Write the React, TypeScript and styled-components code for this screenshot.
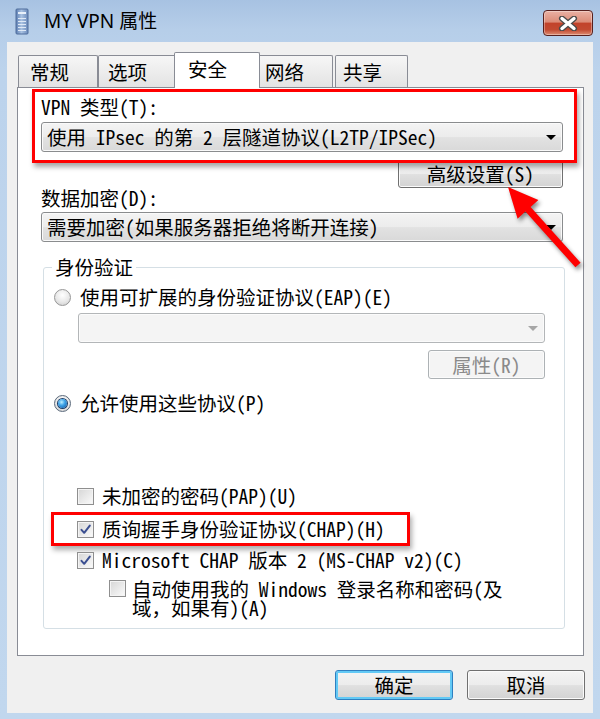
import React from 'react';
import styled, { createGlobalStyle } from 'styled-components';

const Global = createGlobalStyle`
  body {
    margin: 0;
    font-family: "Noto Sans Mono CJK SC", "Noto Sans CJK SC", "DejaVu Sans", sans-serif;
    font-size: 19.5px;
    color: #000;
  }
`;

const Window = styled.div`
  position: relative;
  width: 600px;
  height: 719px;
  display: flex;
  flex-direction: column;
  overflow: hidden;
  background: linear-gradient(180deg, #a7c2e2 0px, #b6cee9 30px, #bcd3ec 70px, #c1d7ee 100%);
`;

const TitleBar = styled.div`
  height: 42px;
  flex-shrink: 0;
  display: flex;
  align-items: center;
  padding-left: 15px;
`;

const Title = styled.span`
  margin-left: 15px;
  font-family: "Noto Sans", "Noto Sans CJK SC", sans-serif;
  font-size: 19px;
  line-height: 24px;
`;

const CloseButton = styled.div`
  width: 50px;
  height: 26px;
  box-sizing: border-box;
  align-self: flex-start;
  margin: 10px 7px 0 auto;
  border: 1px solid #57201e;
  border-radius: 4px;
  background: linear-gradient(180deg, #eab1a4 0%, #dc8c78 45%, #c2432b 52%, #c24a31 78%, #de8d72 100%);
  box-shadow: inset 0 0 0 1px rgba(255, 255, 255, 0.35);
  display: flex;
  align-items: center;
  justify-content: center;
`;

const Client = styled.div`
  flex: 1;
  margin: 0 7px 6px;
  padding: 10px 9px 0 10px;
  background: #f0f0f0;
  display: flex;
  flex-direction: column;
`;

const TabRow = styled.div`
  height: 35px;
  display: flex;
  align-items: flex-end;
  padding-left: 1px;
  position: relative;
  z-index: 1;
`;

const Tab = styled.div<{ $w: number; $pad: number; $active?: boolean; $gap?: number }>`
  width: ${(p) => p.$w}px;
  height: ${(p) => (p.$active ? 36 : 32)}px;
  box-sizing: border-box;
  flex-shrink: 0;
  padding: 5px 0 0 ${(p) => p.$pad}px;
  line-height: 22px;
  border: 1px solid #898c95;
  border-bottom: none;
  border-radius: 2px 2px 0 0;
  margin: ${(p) => (p.$active ? '0 -2px -1px -2px' : `0 0 0 ${p.$gap ?? 0}px`)};
  position: relative;
  z-index: ${(p) => (p.$active ? 2 : 0)};
  background: ${(p) =>
    p.$active ? '#ffffff' : 'linear-gradient(180deg, #f6f6f6 0%, #ececec 55%, #e3e3e3 100%)'};
`;

const Panel = styled.div`
  height: 569px;
  box-sizing: border-box;
  background: #fff;
  border: 1px solid #898c95;
  padding: 0 20px 0 23px;
  display: flex;
  flex-direction: column;
  position: relative;
  z-index: 0;
`;

const Callout = styled.div`
  position: relative;
  z-index: 1;
  border: 3px solid #ff0000;
  box-shadow: 2px 4px 5px rgba(0, 0, 0, 0.35);
  margin: 1px -14px 0 -9px;
  padding: 4px 11px 8px 6px;
`;

const FieldLabel = styled.div<{ $top?: number }>`
  line-height: 22px;
  margin-top: ${(p) => p.$top ?? 0}px;
  white-space: nowrap;
`;

const Combo = styled.div<{ $top?: number; $disabled?: boolean; $inset?: number }>`
  height: 30px;
  box-sizing: border-box;
  margin: ${(p) => p.$top ?? 0}px ${(p) => p.$inset ?? 0}px 0 ${(p) => p.$inset ?? 0}px;
  padding: 0 6px 0 5px;
  display: flex;
  align-items: center;
  line-height: 22px;
  white-space: nowrap;
  border: 1px solid ${(p) => (p.$disabled ? '#b3b6b8' : '#8a8c8e')};
  border-radius: 3px;
  background: ${(p) =>
    p.$disabled
      ? '#f4f4f4'
      : 'linear-gradient(180deg, #f4f4f4 0%, #ececec 50%, #e2e2e2 52%, #d9d9d9 100%)'};
  box-shadow: inset 0 0 0 1px ${(p) => (p.$disabled ? '#fbfbfb' : '#fafafa')};
`;

const DropArrow = styled.span<{ $disabled?: boolean }>`
  margin-left: auto;
  width: 0;
  height: 0;
  border-left: 5px solid transparent;
  border-right: 5px solid transparent;
  border-top: 5px solid ${(p) => (p.$disabled ? '#a6a6a6' : '#000')};
`;

const ButtonRow = styled.div<{ $top?: number; $right?: number }>`
  display: flex;
  justify-content: flex-end;
  margin-top: ${(p) => p.$top ?? 0}px;
  margin-right: ${(p) => p.$right ?? 0}px;
`;

const PushButton = styled.div<{ $w: number; $h?: number; $disabled?: boolean; $primary?: boolean }>`
  width: ${(p) => p.$w}px;
  height: ${(p) => p.$h ?? 29}px;
  box-sizing: border-box;
  display: flex;
  align-items: center;
  justify-content: center;
  line-height: 22px;
  white-space: nowrap;
  border-radius: 3px;
  color: ${(p) => (p.$disabled ? '#8a8a8a' : '#000')};
  border: 1px solid ${(p) => (p.$disabled ? '#adb2b5' : p.$primary ? '#2f7fc0' : '#707070')};
  background: ${(p) =>
    p.$disabled
      ? '#f4f4f4'
      : 'linear-gradient(180deg, #f4f4f4 0%, #ececec 50%, #e0e0e0 52%, #d3d3d3 100%)'};
  box-shadow: inset 0 0 0 ${(p) => (p.$primary ? '2px #62c9f5' : '1px #fbfbfb')};
`;

const Group = styled.fieldset`
  margin: 14px -2px 0 2px;
  padding: 0 0 11px;
  min-width: 0;
  border: 1px solid #d5dfe5;
  border-radius: 3px;
`;

const Legend = styled.legend`
  margin-left: 8px;
  padding: 0 3px;
  line-height: 22px;
`;

const OptionRow = styled.div<{ $indent: number; $top?: number; $gap?: number; $multi?: boolean }>`
  display: flex;
  align-items: ${(p) => (p.$multi ? 'flex-start' : 'center')};
  gap: ${(p) => p.$gap ?? 8}px;
  padding-left: ${(p) => p.$indent}px;
  margin-top: ${(p) => p.$top ?? 0}px;
  line-height: ${(p) => (p.$multi ? 19 : 22)}px;
  white-space: nowrap;
`;

const CalloutRow = styled.div`
  width: 359px;
  box-sizing: border-box;
  margin: 5px 0 0 7px;
  padding: 3px 0 3px 23px;
  border: 3px solid #ff0000;
  box-shadow: 2px 4px 5px rgba(0, 0, 0, 0.32);
`;

const Radio = styled.span<{ $checked?: boolean }>`
  width: 17px;
  height: 17px;
  flex-shrink: 0;
  box-sizing: border-box;
  border-radius: 50%;
  border: 1px solid ${(p) => (p.$checked ? '#5b6a7c' : '#979797')};
  background: radial-gradient(circle at 50% 35%, #ffffff 0%, #e8e8e8 55%, #c9c9c9 100%);
  display: flex;
  align-items: center;
  justify-content: center;
  &::after {
    content: '';
    display: ${(p) => (p.$checked ? 'block' : 'none')};
    width: 9px;
    height: 9px;
    border-radius: 50%;
    background: radial-gradient(circle at 40% 35%, #bff0ff 0%, #3fa4e8 40%, #0b4f9c 100%);
    box-shadow: 0 0 0 1px #1c3e68;
  }
`;

const CheckBox = styled.span<{ $lift?: number }>`
  width: 17px;
  height: 17px;
  flex-shrink: 0;
  box-sizing: border-box;
  margin-top: ${(p) => p.$lift ?? 0}px;
  border: 1px solid #8f8f8f;
  background: linear-gradient(135deg, #d6d6d6 0%, #ececec 60%, #fbfbfb 100%);
  box-shadow: inset 0 0 0 1px #f4f4f4;
  display: flex;
  align-items: center;
  justify-content: center;
`;

const DialogButtons = styled.div`
  display: flex;
  justify-content: flex-end;
  gap: 14px;
  margin: 14px -1px 0 0;
`;

const PointerArrow = styled.svg`
  position: absolute;
  left: 500px;
  top: 180px;
  width: 90px;
  height: 95px;
  overflow: visible;
  filter: drop-shadow(2px 3px 2px rgba(0, 0, 0, 0.45));
  pointer-events: none;
`;

const Tick = () => (
  <svg width="13" height="13" viewBox="0 0 13 13">
    <path d="M2.5 6.8 L5.2 9.8 L10.8 2.6" fill="none" stroke="#3b4f91" strokeWidth="2" strokeLinecap="round" strokeLinejoin="round" />
  </svg>
);

const ServerIcon = () => (
  <svg width="14" height="27" viewBox="0 0 14 27">
    <defs>
      <linearGradient id="srv" x1="0" x2="1" y1="0" y2="0">
        <stop offset="0" stopColor="#5d7fb3" />
        <stop offset="0.45" stopColor="#a9c2e2" />
        <stop offset="1" stopColor="#6d8cbb" />
      </linearGradient>
    </defs>
    <rect x="1" y="1" width="12" height="25" rx="1" fill="url(#srv)" stroke="#4e6d9c" strokeWidth="1" />
    <rect x="3" y="4" width="8" height="2" fill="#e8f0fa" />
    {[10, 13, 16, 19, 22].map((y) => (
      <rect key={y} x="3" y={y} width="8" height="1" fill="#dfe9f6" />
    ))}
  </svg>
);

const tabs = [
  { label: '常规', w: 80, pad: 11 },
  { label: '选项', w: 78, pad: 9 },
  { label: '安全', w: 86, pad: 13, active: true },
  { label: '网络', w: 75, pad: 6 },
  { label: '共享', w: 73, pad: 7, gap: 2 },
];

export default function App() {
  return (
    <>
      <Global />
      <Window>
        <TitleBar>
          <ServerIcon />
          <Title>MY VPN 属性</Title>
          <CloseButton>
            <svg width="22" height="15" viewBox="0 0 22 15">
              <path d="M5 2.5 L17 12.5 M17 2.5 L5 12.5" stroke="#4a4a4a" strokeWidth="6" strokeLinecap="round" />
              <path d="M5 2.5 L17 12.5 M17 2.5 L5 12.5" stroke="#ffffff" strokeWidth="3.4" strokeLinecap="round" />
            </svg>
          </CloseButton>
        </TitleBar>

        <Client>
          <TabRow>
            {tabs.map((t) => (
              <Tab key={t.label} $w={t.w} $pad={t.pad} $active={t.active} $gap={t.gap}>
                {t.label}
              </Tab>
            ))}
          </TabRow>

          <Panel>
            <Callout>
              <FieldLabel>VPN 类型(T):</FieldLabel>
              <Combo $top={4}>
                使用 IPsec 的第 2 层隧道协议(L2TP/IPSec)
                <DropArrow />
              </Combo>
            </Callout>
            <ButtonRow $top={-3}>
              <PushButton $w={165} $h={28}>高级设置(S)</PushButton>
            </ButtonRow>

            <FieldLabel $top={-1}>数据加密(D):</FieldLabel>
            <Combo $top={3}>
              需要加密(如果服务器拒绝将断开连接)
              <DropArrow />
            </Combo>

            <Group>
              <Legend>身份验证</Legend>
              <OptionRow $indent={10} $top={8} $gap={9}>
                <Radio />
                使用可扩展的身份验证协议(EAP)(E)
              </OptionRow>
              <Combo $top={5} $disabled $inset={0} style={{ marginLeft: 34, marginRight: 19 }}>
                <DropArrow $disabled />
              </Combo>
              <ButtonRow $top={7} $right={19}>
                <PushButton $w={117} $disabled>属性(R)</PushButton>
              </ButtonRow>
              <OptionRow $indent={10} $top={13} $gap={9}>
                <Radio $checked />
                允许使用这些协议(P)
              </OptionRow>

              <OptionRow $indent={33} $top={71}>
                <CheckBox />
                未加密的密码(PAP)(U)
              </OptionRow>
              <CalloutRow>
                <OptionRow $indent={0}>
                  <CheckBox>
                    <Tick />
                  </CheckBox>
                  质询握手身份验证协议(CHAP)(H)
                </OptionRow>
              </CalloutRow>
              <OptionRow $indent={33} $top={3}>
                <CheckBox>
                  <Tick />
                </CheckBox>
                Microsoft CHAP 版本 2 (MS-CHAP v2)(C)
              </OptionRow>
              <OptionRow $indent={65} $top={8} $gap={6} $multi>
                <CheckBox $lift={1} />
                <span>
                  自动使用我的 Windows 登录名称和密码(及
                  <br />
                  域，如果有)(A)
                </span>
              </OptionRow>
            </Group>
          </Panel>

          <DialogButtons>
            <PushButton $w={118} $h={30} $primary>确定</PushButton>
            <PushButton $w={118} $h={30}>取消</PushButton>
          </DialogButtons>
        </Client>

        <PointerArrow viewBox="500 180 90 95">
          <polygon
            points="508,187 538.4,200 530.6,207 580.6,262.7 575.4,267.3 525.4,211.6 517.6,218.7"
            fill="#ff0000"
          />
        </PointerArrow>
      </Window>
    </>
  );
}
